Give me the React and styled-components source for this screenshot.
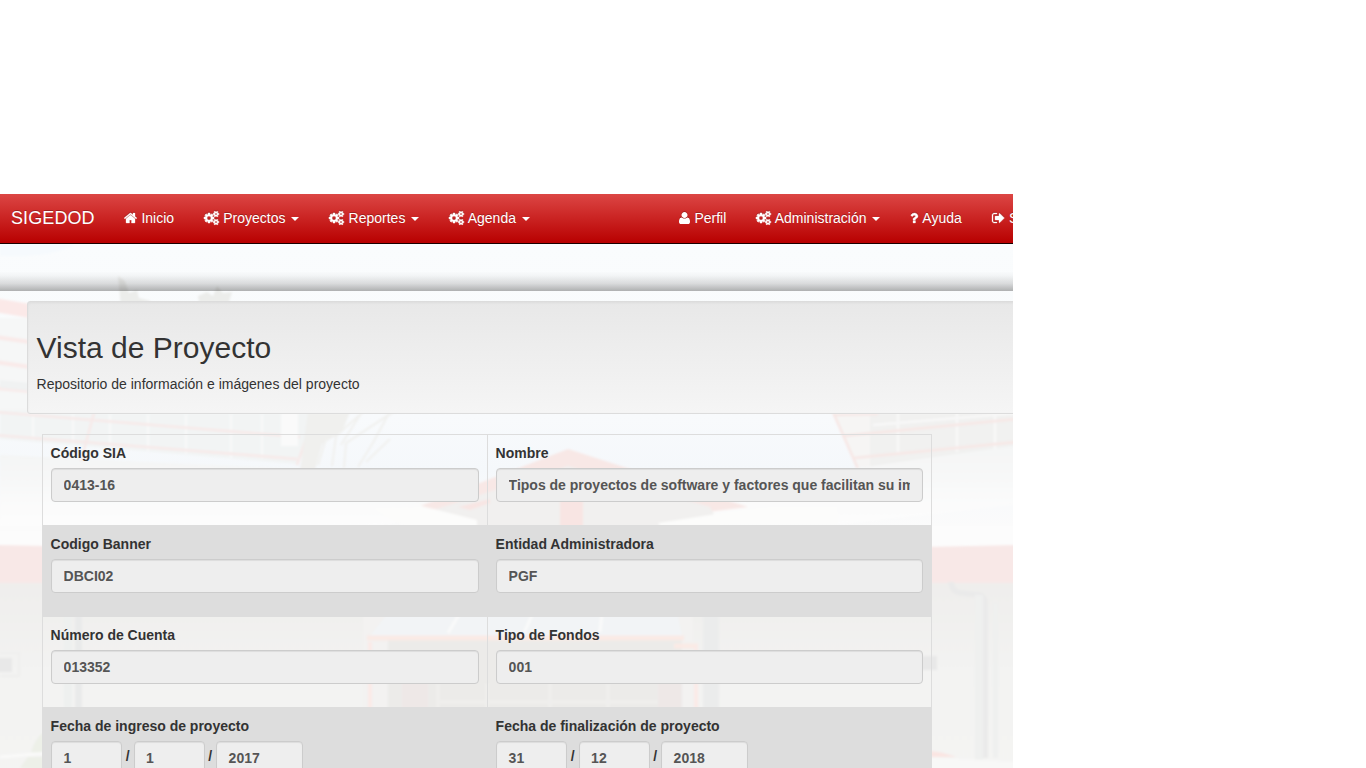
import React from "react";
import styled, { createGlobalStyle } from "styled-components";

const GlobalStyle = createGlobalStyle`
  *, *::before, *::after { box-sizing: border-box; }
  html, body { margin: 0; background: #fff; overflow: hidden; }
  body {
    font-family: "Liberation Sans", Arial, sans-serif;
    font-size: 14px;
    line-height: 20px;
    color: #333;
  }
`;

const Page = styled.div`
  width: 1013px;
  height: 768px;
  padding-top: 194px;
  overflow: hidden;
`;

const Navbar = styled.nav`
  display: flex;
  width: 1080px;
  height: 50px;
  border-bottom: 1px solid #1b0000;
  background: linear-gradient(#dc4644, #b80000);
  color: #fff;
  text-shadow: 0 -1px 0 rgba(0, 0, 0, 0.25);
`;

const Brand = styled.span`
  width: 109px;
  padding: 14px 0 0 11px;
  font-size: 18px;
  letter-spacing: 0.1px;
`;

const Menu = styled.div`
  display: flex;
  width: ${(p) => p.$width || "auto"};
`;

const MenuItem = styled.a`
  padding: 14px 14.8px 15px 15px;
  white-space: pre;
  color: #fff;
`;

const Icon = styled.svg`
  display: inline-block;
  height: 14px;
  margin-right: 0.5px;
  vertical-align: -2px;
  fill: currentColor;
  stroke: currentColor;
  stroke-width: ${(p) => p.$weight || 0};
  overflow: visible;
  filter: drop-shadow(0 -1px 0 rgba(0, 0, 0, 0.2));
`;

const Caret = styled.span`
  display: inline-block;
  margin-left: 2px;
  vertical-align: middle;
  border-top: 4px solid;
  border-left: 4px solid transparent;
  border-right: 4px solid transparent;
`;

const Content = styled.main`
  position: relative;
  height: 524px;
  overflow: hidden;
`;

const Backdrop = styled.svg`
  position: absolute;
  inset: 0;
`;

const Foreground = styled.div`
  position: relative;
`;

const Shade = styled.div`
  height: 47px;
  margin-bottom: 10px;
  background: linear-gradient(
    rgba(0, 0, 0, 0) 58%,
    rgba(0, 0, 0, 0.03) 68%,
    rgba(0, 0, 0, 0.13) 84%,
    rgba(0, 0, 0, 0.3) 100%
  );
`;

const Well = styled.header`
  width: 1030px;
  height: 113px;
  margin-left: 27px;
  padding: 9px 9px 9px 8.6px;
  border: 1px solid #dcdcdc;
  border-radius: 3px;
  background: linear-gradient(#e8e8e8, #f5f5f5);
  box-shadow: inset 0 1px 3px rgba(0, 0, 0, 0.05), 0 1px 0 rgba(255, 255, 255, 0.1);
`;

const Title = styled.h2`
  margin: 20px 0 10px;
  font-size: 30px;
  line-height: 33px;
  font-weight: 400;
`;

const Subtitle = styled.p`
  margin: 0;
`;

const Table = styled.section`
  width: 890px;
  margin: 20px 0 0 42px;
`;

const Row = styled.div`
  display: grid;
  grid-template-columns: 445px 445px;
  height: 91px;
  background: ${(p) => (p.$striped ? "#ddd" : "transparent")};
  border-top: 1px solid #ddd;
`;

const Cell = styled.div`
  padding: 8px;
  border-left: 1px solid #ddd;
  &:last-child { border-right: 1px solid #ddd; }
`;

const Label = styled.div`
  margin: 0 0 5px -0.4px;
  font-weight: 700;
  color: #333;
`;

const Input = styled.div`
  width: ${(p) => p.$width || "100%"};
  height: 34px;
  padding: 6px 12px 6px 11.6px;
  border: 1px solid #ccc;
  border-radius: 4px;
  background: #eee;
  box-shadow: inset 0 1px 1px rgba(0, 0, 0, 0.075);
  color: #555;
  font-weight: 700;
`;

const Value = styled.span`
  display: block;
  overflow: hidden;
  white-space: nowrap;
`;

const DateGroup = styled.div`
  display: flex;
`;

const Slash = styled.span`
  width: 11.5px;
  padding-top: 5px;
  text-align: center;
  font-weight: 700;
`;

const smallCog =
  "v140q0 16-149 31-12 27-30 52 51 113 51 138 0 4-4 7-122 71-124 71-8 0-46-47t-52-68q-20 2-30 2t-30-2q-14 21-52 68t-46 47q-2 0-124-71-4-3-4-7 0-25 51-138-18-25-30-52-149-15-149-31v-140q0-16 149-31 13-29 30-52-51-113-51-138 0-4 4-7 4-2 35-20t59-34 30-16q8 0 46 46.5t52 67.5q20-2 30-2t30 2q51-71 92-112l6-2q4 0 124 70 4 3 4 7 0 25-51 138 17 23 30 52 149 15 149 31z";

const icons = {
  home: {
    x: 64,
    w: 1664,
    weight: 40,
    d: "M1472 992v480q0 26-19 45t-45 19h-384v-384h-256v384h-384q-26 0-45-19t-19-45v-480q0-1 .5-3t.5-3l575-474 575 474q1 2 1 6zm223-69l-62 74q-8 9-21 11h-3q-13 0-21-7l-692-577-692 577q-12 8-24 7-13-2-21-11l-62-74q-8-10-7-23.5t11-21.5l719-599q32-26 76-26t76 26l244 204v-195q0-14 9-23t23-9h192q14 0 23 9t9 23v408l219 182q10 8 11 21.5t-7 23.5z",
  },
  cogs: {
    x: -64,
    w: 1920,
    weight: 70,
    d:
      "M832 896q0-106-75-181t-181-75-181 75-75 181 75 181 181 75 181-75 75-181zm768 512q0-52-38-90t-90-38-90 38-38 90q0 53 37.5 90.5t90.5 37.5 90.5-37.5 37.5-90.5zm0-1024q0-52-38-90t-90-38-90 38-38 90q0 53 37.5 90.5t90.5 37.5 90.5-37.5 37.5-90.5zm-384 421v185q0 10-7 19.5t-16 10.5l-155 24q-11 35-32 76 34 48 90 115 7 11 7 20 0 12-7 19-23 30-82.5 89.5t-78.5 59.5q-11 0-21-7l-115-90q-37 19-77 31-11 108-23 155-7 24-30 24h-186q-11 0-20-7.5t-10-17.5l-23-153q-34-10-75-31l-118 89q-7 7-20 7-11 0-21-8-144-133-144-160 0-9 7-19 10-14 41-53t47-61q-23-44-35-82l-152-24q-10-1-17-9.5t-7-19.5v-185q0-10 7-19.5t16-10.5l155-24q11-35 32-76-34-48-90-115-7-11-7-20 0-12 7-20 22-30 82-89t79-59q11 0 21 7l115 90q34-18 77-32 11-108 23-154 7-24 30-24h186q11 0 20 7.5t10 17.5l23 153q34 10 75 31l118-89q8-7 20-7 11 0 21 8 144 133 144 160 0 8-7 19-12 16-42 54t-45 60q23 48 34 82l152 23q10 2 17 10.5t7 19.5zm640 533" +
      smallCog +
      "m0-1024" +
      smallCog,
  },
  user: {
    x: 0,
    w: 1408,
    flip: true,
    d: "M1408 131q0-120-73-189.5t-194-69.5h-874q-121 0-194 69.5t-73 189.5q0 53 3.5 103.5t14 109t26.5 108.5t43 97.5t62 81t85.5 53.5t111.5 20q9 0 42-21.5t74.5-48t108-48t133.5-21.5t133.5 21.5t108 48t74.5 48t42 21.5q61 0 111.5-20t85.5-53.5t62-81t43-97.5t26.5-108.5t14-109t3.5-103.5zM1088 1024q0-159-112.5-271.5t-271.5-112.5t-271.5 112.5t-112.5 271.5t112.5 271.5t271.5 112.5t271.5-112.5t112.5-271.5z",
  },
  question: {
    x: 384,
    w: 1088,
    weight: 40,
    d: "M1088 1256v240q0 16-12 28t-28 12h-240q-16 0-28-12t-12-28v-240q0-16 12-28t28-12h240q16 0 28 12t12 28zm316-600q0 54-15.5 101t-35 76.5-55 59.5-57.5 43.5-61 35.5q-41 23-68.5 65t-27.5 67q0 17-12 32.5t-28 15.5h-240q-15 0-25.5-18.5t-10.5-37.5v-45q0-83 65-156.5t143-108.5q59-27 84-56t25-76q0-42-46.5-74t-107.5-32q-65 0-108 29-35 25-107 115-13 16-31 16-12 0-25-8l-164-125q-13-10-15.5-25t5.5-28q160-266 464-266 80 0 161 31t146 83 106 127.5 41 158.5z",
  },
  signOut: {
    x: 64,
    w: 1664,
    weight: 40,
    d: "M704 1440q0 4 1 20t.5 26.5-3 23.5-10 19.5-20.5 6.5h-320q-119 0-203.5-84.5t-84.5-203.5v-704q0-119 84.5-203.5t203.5-84.5h320q13 0 22.5 9.5t9.5 22.5q0 4 1 20t.5 26.5-3 23.5-10 19.5-20.5 6.5h-320q-66 0-113 47t-47 113v704q0 66 47 113t113 47h312l11.5 1 11.5 3 8 5.5 7 9 2 13.5zm928-544q0 26-19 45l-544 544q-19 19-45 19t-45-19-19-45v-288h-448q-26 0-45-19t-19-45v-384q0-26 19-45t45-19h448v-288q0-26 19-45t45-19 45 19l544 544q19 19 19 45z",
  },
};

function NavLink({ icon, text, caret }) {
  const i = icons[icon];
  return (
    <MenuItem>
      <Icon width={i.w / 128} viewBox={`${i.x} 0 ${i.w} 1792`} $weight={i.weight}>
        <path d={i.d} transform={i.flip ? "translate(0 1536) scale(1 -1)" : undefined} />
      </Icon>
      {" " + text}
      {caret && " "}
      {caret && <Caret />}
    </MenuItem>
  );
}

function Field({ label, value }) {
  return (
    <Cell>
      <Label>{label}</Label>
      <Input><Value>{value}</Value></Input>
    </Cell>
  );
}

function DateField({ label, day, month, year }) {
  return (
    <Cell>
      <Label>{label}</Label>
      <DateGroup>
        <Input $width="71px">{day}</Input>
        <Slash>/</Slash>
        <Input $width="71px">{month}</Input>
        <Slash>/</Slash>
        <Input $width="87px">{year}</Input>
      </DateGroup>
    </Cell>
  );
}

function CampusPhoto() {
  return (
    <Backdrop width="1013" height="524" viewBox="0 244 1013 524">
      <defs>
        <linearGradient id="sky" x1="0" y1="0" x2="0" y2="1">
          <stop offset="0" stopColor="#fafcfd" />
          <stop offset=".33" stopColor="#f8fafc" />
          <stop offset=".43" stopColor="#f5f8fb" />
          <stop offset=".54" stopColor="#fbfbfb" />
        </linearGradient>
        <linearGradient id="wall" x1="0" y1="0" x2="0" y2="1">
          <stop offset="0" stopColor="#efeeec" />
          <stop offset=".45" stopColor="#f3f3f2" />
          <stop offset="1" stopColor="#f4f4f3" />
        </linearGradient>
        <linearGradient id="eave" x1="0" y1="0" x2="0" y2="1">
          <stop offset="0" stopColor="#f4f5f5" />
          <stop offset="1" stopColor="#fdfdfd" />
        </linearGradient>
        <filter id="soft"><feGaussianBlur stdDeviation="1.2" /></filter>
      </defs>
      <rect y="244" width="1013" height="524" fill="url(#sky)" />
      <g filter="url(#soft)">
        <path d="M0 244h75q-20 14-75 12z" fill="#f6fafd" />
        <path d="M118 276l7 5 4 12 8-3 2 8 12 3-10 6h-20zM198 296l9-4 6 4 4-10 6 7 9-1-3 10h-30z" fill="#ecedeb" />
        <path d="M-5 298l35 6v14l-35-6z" fill="#fbe9e8" />
        <path d="M-5 318h35v96h-35z" fill="#f6f7f7" />
        <path d="M-5 337l35 5M-5 362l35 5M-5 388l35 3" stroke="#f9eae9" strokeWidth="4" />
        <path d="M0 380l30 3v8l-30-3z" fill="#f0f2f2" />
        <path d="M0 410h315l-18 54L0 439z" fill="#f2f4f4" />
        <path d="M0 455l300 14 170 45-100 12H0z" fill="url(#eave)" />
        <path d="M33 414v26M73 414v30M110 414v34M148 414v37M186 414v40M231 414v44M262 414v45" stroke="#f8f9f9" strokeWidth="2" />
        <path d="M-5 412l305 25M-5 435l302 24M94 413l-13 48M315 413l-18 52" fill="none" stroke="#f7e9e8" strokeWidth="2.4" />
        <path d="M281 412h17v34h-17z" fill="#fafafa" />
        <path d="M308 412h42l-8 20-20 12-7 26h-15z" fill="#f0f0ee" />
        <path d="M318 465l15-50M332 466l4-30 28-25M344 468l2-25 47-31M358 467l16-26 15-28M341 445l19-30M366 462l24-23" fill="none" stroke="#f1f1ef" strokeWidth="2.2" />
        <path d="M833 412h185v55h-160z" fill="#f6f5f4" />
        <path d="M870 412h148v44l-148 12z" fill="#f1f1f0" />
        <path d="M898 412v42M957 412v40M995 412v38M873 425l145-12" stroke="#f8f8f8" strokeWidth="2.4" />
        <path d="M833 412l25 57M833 415l45-1M842 436l175-17M854 458l163-16" fill="none" stroke="#f7e7e5" strokeWidth="2.5" />
        <path d="M858 468l160-23v60l-195 21-160-1z" fill="url(#eave)" />
        <path d="M568 449l180 58-40 5-140-38-130 35-28 1z" fill="#f8e8e6" />
        <path d="M568 466l142 41 12 22H442l-14-17z" fill="#f1f0ef" />
        <path d="M560 500h23v27h-23zM458 507l32-8v4l-20 7z" fill="#f8e5e3" />
        <path d="M370 507l52-1 55 14v8h-70zM658 523l110-17h70v20H660z" fill="#fcfcfb" />
        <path d="M-5 530h52v16H-5zM925 525h95v21h-95z" fill="#fcfcfc" />
        <rect x="-5" y="582" width="1025" height="195" fill="url(#wall)" />
        <path d="M-5 545l52 1v37H-5zM925 547l95-2v38h-95z" fill="#f8e8e7" />
        <path d="M-2 658h14v14H-2zM921 656h16v14h-16z" fill="#e8e8e8" />
        <path d="M0 653h19v23H0" fill="none" stroke="#efefee" strokeWidth="2" />
        <path d="M951 582q1 10 10 11l18 2q6 1 6 8v155" fill="none" stroke="#eaeaea" strokeWidth="6" />
        <path d="M975 595h8v165h-8zM993 603h5v155h-5z" fill="#eff0ef" />
        <path d="M64 612h8v100h-8z" fill="#eef0ef" />
        <path d="M75 612h7v100h-7z" fill="#e9eaea" />
        <path d="M363 612h330v100H363z" fill="#f3f2f1" />
        <path d="M388 640h294v72H388z" fill="#ecebe9" />
        <path d="M389 612h288l5 24H370z" fill="#f2f4f6" />
        <path d="M448 633l12-20M524 633l9-20M600 632l2-19" stroke="#fafafa" strokeWidth="3" />
        <path d="M367 638h317M674 646h24" fill="none" stroke="#faeae5" strokeWidth="5" />
        <path d="M370 642v70M696 646v66" stroke="#faeae7" strokeWidth="4" />
        <path d="M402 680h26v32h-26zM658 680h24v32h-24z" fill="#eee8e7" />
        <path d="M438 684v28M487 684v28M550 680v32M608 684v28M440 702h218" stroke="#f0efed" strokeWidth="3" />
        <path d="M703 612h16v100h-16z" fill="#ebecec" />
        <path d="M31 752q6-18 16-21v24zM20 768l8-11h20v14z" fill="#edf0e8" />
        <path d="M0 757l48-4" stroke="#fafaf9" strokeWidth="3" />
        <path d="M928 751q12 0 28 6h-28z" fill="#fae5e2" />
        <path d="M925 757l95 5v10h-95z" fill="#f8f8f7" />
      </g>
    </Backdrop>
  );
}

export default function App() {
  return (
    <>
      <GlobalStyle />
      <Page>
        <Navbar>
          <Brand>SIGEDOD</Brand>
          <Menu $width="555px">
            <NavLink icon="home" text="Inicio" />
            <NavLink icon="cogs" text="Proyectos" caret />
            <NavLink icon="cogs" text="Reportes" caret />
            <NavLink icon="cogs" text="Agenda" caret />
          </Menu>
          <Menu>
            <NavLink icon="user" text="Perfil" />
            <NavLink icon="cogs" text="Administración" caret />
            <NavLink icon="question" text="Ayuda" />
            <NavLink icon="signOut" text="Salir" />
          </Menu>
        </Navbar>
        <Content>
          <CampusPhoto />
          <Foreground>
            <Shade />
            <Well>
              <Title>Vista de Proyecto</Title>
              <Subtitle>Repositorio de información e imágenes del proyecto</Subtitle>
            </Well>
            <Table>
              <Row>
                <Field label="Código SIA" value="0413-16" />
                <Field label="Nombre" value="Tipos de proyectos de software y factores que facilitan su implementación" />
              </Row>
              <Row $striped>
                <Field label="Codigo Banner" value="DBCI02" />
                <Field label="Entidad Administradora" value="PGF" />
              </Row>
              <Row>
                <Field label="Número de Cuenta" value="013352" />
                <Field label="Tipo de Fondos" value="001" />
              </Row>
              <Row $striped>
                <DateField label="Fecha de ingreso de proyecto" day="1" month="1" year="2017" />
                <DateField label="Fecha de finalización de proyecto" day="31" month="12" year="2018" />
              </Row>
            </Table>
          </Foreground>
        </Content>
      </Page>
    </>
  );
}
